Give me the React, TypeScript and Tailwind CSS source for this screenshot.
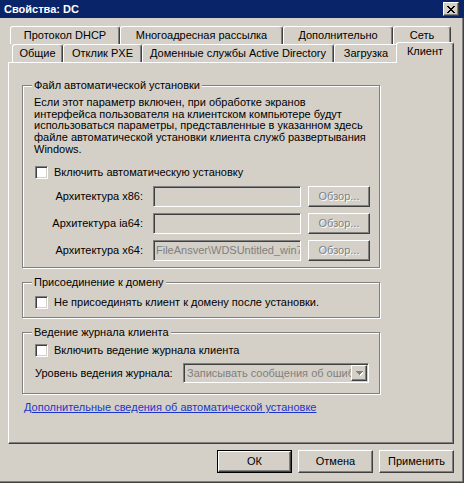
import React from "react";

const raised =
  "border border-t-white border-l-white border-r-[#404040] border-b-[#404040] shadow-[inset_-1px_-1px_0_#808080]";
const sunken =
  "border border-t-[#808080] border-l-[#808080] border-r-white border-b-white shadow-[inset_1px_1px_0_#404040,inset_-1px_-1px_0_#d4d0c8]";
const etched = "border border-[#808080] shadow-[1px_1px_0_#fff,inset_1px_1px_0_#fff]";
const grayText = "text-[#808080] [text-shadow:1px_1px_0_#fff]";

const row1 = [
  { label: "Протокол DHCP", w: "w-[110px]" },
  { label: "Многоадресная рассылка", w: "w-[163px]" },
  { label: "Дополнительно", w: "w-[110px]" },
  { label: "Сеть", w: "w-[58px]" },
];

const row2 = [
  { label: "Общие", w: "w-[51px]" },
  { label: "Отклик PXE", w: "w-[79px]" },
  { label: "Доменные службы Active Directory", w: "w-[192px]" },
  { label: "Загрузка", w: "w-[64px]" },
];

function Tab({ label, w }: { label: string; w: string }) {
  return (
    <div
      className={`${w} h-[18px] flex items-center justify-center rounded-t-[3px] border-t border-l border-r border-t-white border-l-white border-r-[#404040] shadow-[inset_-1px_0_0_#808080] whitespace-nowrap`}
    >
      {label}
    </div>
  );
}

function CheckBox({ label }: { label: string }) {
  return (
    <div className="flex items-center h-[13px]">
      <div className={`w-[13px] h-[13px] bg-white ${sunken}`} />
      <span className="ml-[6px] whitespace-nowrap">{label}</span>
    </div>
  );
}

function GroupBox({ title, h, children }: { title: string; h: string; children: React.ReactNode }) {
  return (
    <div className={`relative w-[358px] ${h} ${etched}`}>
      <span className="absolute -top-[7px] left-[9px] px-[2px] bg-[#d4d0c8] leading-[13px] whitespace-nowrap">
        {title}
      </span>
      {children}
    </div>
  );
}

function ArchRow({ label, value }: { label: string; value?: string }) {
  return (
    <div className="flex items-center h-[21px]">
      <div className="w-[109px] text-right whitespace-nowrap">{label}</div>
      <div className={`ml-[10px] w-[148px] h-[21px] ${sunken} overflow-hidden flex items-center pl-[2px]`}>
        {value && <span className="text-[#808080] whitespace-nowrap">{value}</span>}
      </div>
      <div className={`ml-[7px] w-[62px] h-[21px] ${raised} flex items-center justify-center ${grayText}`}>
        Обзор...
      </div>
    </div>
  );
}

function Button({ label, isDefault }: { label: string; isDefault?: boolean }) {
  if (isDefault) {
    return (
      <div className="w-[75px] h-[23px] border border-black">
        <div className={`w-full h-full ${raised} flex items-center justify-center`}>{label}</div>
      </div>
    );
  }
  return (
    <div className={`w-[75px] h-[23px] ${raised} flex items-center justify-center`}>{label}</div>
  );
}

export default function App() {
  return (
    <div className="w-[464px] h-[483px] bg-[#d4d0c8] overflow-hidden text-[11px] leading-[13px] text-black font-['Liberation_Sans',Arial,sans-serif] shadow-[inset_-1px_-1px_0_#404040,inset_-2px_-2px_0_#808080]">
      {/* title bar */}
      <div className="h-[18px] bg-[#0a246a] flex items-center justify-between pl-[4px] pr-[5px]">
        <span className="text-white font-bold text-[11px] leading-[13px]">Свойства: DC</span>
        <div className={`w-[16px] h-[14px] bg-[#d4d0c8] ${raised} flex items-center justify-center`}>
          <svg width="8" height="7" viewBox="0 0 8 7" shapeRendering="crispEdges">
            <path
              d="M0 0h2v1H0zM6 0h2v1H6zM1 1h2v1H1zM5 1h2v1H5zM2 2h4v1H2zM3 3h2v1H3zM2 4h4v1H2zM1 5h2v1H1zM5 5h2v1H5zM0 6h2v1H0zM6 6h2v1H6z"
              fill="#000"
            />
          </svg>
        </div>
      </div>

      {/* tabs */}
      <div className="mt-[8px] ml-[8px] w-[446px]">
        <div className="flex ml-[2px]">
          {row1.map((t) => (
            <Tab key={t.label} {...t} />
          ))}
        </div>
        <div className="relative z-10 flex items-end h-[18px] ml-[4px]">
          {row2.map((t) => (
            <Tab key={t.label} {...t} />
          ))}
          <div className="relative z-10 -ml-[2px] -mb-[1px] w-[58px] h-[21px] pb-[3px] bg-[#d4d0c8] flex items-center justify-center rounded-t-[3px] border-t border-l border-r border-t-white border-l-white border-r-[#404040] shadow-[inset_-1px_0_0_#808080]">
            Клиент
          </div>
        </div>

        {/* panel */}
        <div className="h-[382px] border border-t-white border-l-white border-r-[#404040] border-b-[#404040] shadow-[inset_-1px_-1px_0_#808080] pl-[13px] pt-[22px] flex flex-col">
          <GroupBox title="Файл автоматической установки" h="h-[183px]">
            <div className="pl-[11px] pt-[11px]">
              <p className="leading-[11.7px] whitespace-nowrap">
                Если этот параметр включен, при обработке экранов
                <br />
                интерфейса пользователя на клиентском компьютере будут
                <br />
                использоваться параметры, представленные в указанном здесь
                <br />
                файле автоматической установки клиента служб развертывания
                <br />
                Windows.
              </p>
              <div className="mt-[10px] ml-[1px]">
                <CheckBox label="Включить автоматическую установку" />
              </div>
              <div className="mt-[7px] flex flex-col gap-[6px]">
                <ArchRow label="Архитектура x86:" />
                <ArchRow label="Архитектура ia64:" />
                <ArchRow label="Архитектура x64:" value={"FileAnsver\\WDSUntitled_win7"} />
              </div>
            </div>
          </GroupBox>

          <div className="mt-[14px]">
            <GroupBox title="Присоединение к домену" h="h-[36px]">
              <div className="pl-[12px] pt-[13px]">
                <CheckBox label="Не присоединять клиент к домену после установки." />
              </div>
            </GroupBox>
          </div>

          <div className="mt-[14px]">
            <GroupBox title="Ведение журнала клиента" h="h-[62px]">
              <div className="pl-[12px] pt-[11px]">
                <CheckBox label="Включить ведение журнала клиента" />
                <div className="mt-[6px] flex items-center h-[20px]">
                  <span className="w-[148px] whitespace-nowrap">Уровень ведения журнала:</span>
                  <div className={`w-[186px] h-[20px] ${sunken} flex items-center overflow-hidden`}>
                    <span className="flex-1 pl-[3px] text-[#808080] whitespace-nowrap overflow-hidden">
                      Записывать сообщения об ошибках
                    </span>
                    <div className={`w-[16px] h-[16px] mr-[1px] bg-[#d4d0c8] ${raised} flex items-center justify-center shrink-0`}>
                      <svg width="7" height="5" viewBox="0 0 7 5" shapeRendering="crispEdges">
                        <path d="M1 1h7v1H1zM2 2h5v1H2zM3 3h3v1H3zM4 4h1v1H4z" fill="#fff" />
                        <path d="M0 0h7v1H0zM1 1h5v1H1zM2 2h3v1H2zM3 3h1v1H3z" fill="#808080" />
                      </svg>
                    </div>
                  </div>
                </div>
              </div>
            </GroupBox>
          </div>

          <a className="mt-[7px] ml-[2px] text-[#1c35c9] underline whitespace-nowrap self-start">
            Дополнительные сведения об автоматической установке
          </a>
        </div>
      </div>

      {/* buttons */}
      <div className="mt-[6px] mr-[10px] flex justify-end gap-[6px]">
        <Button label="ОК" isDefault />
        <Button label="Отмена" />
        <Button label="Применить" />
      </div>
    </div>
  );
}
